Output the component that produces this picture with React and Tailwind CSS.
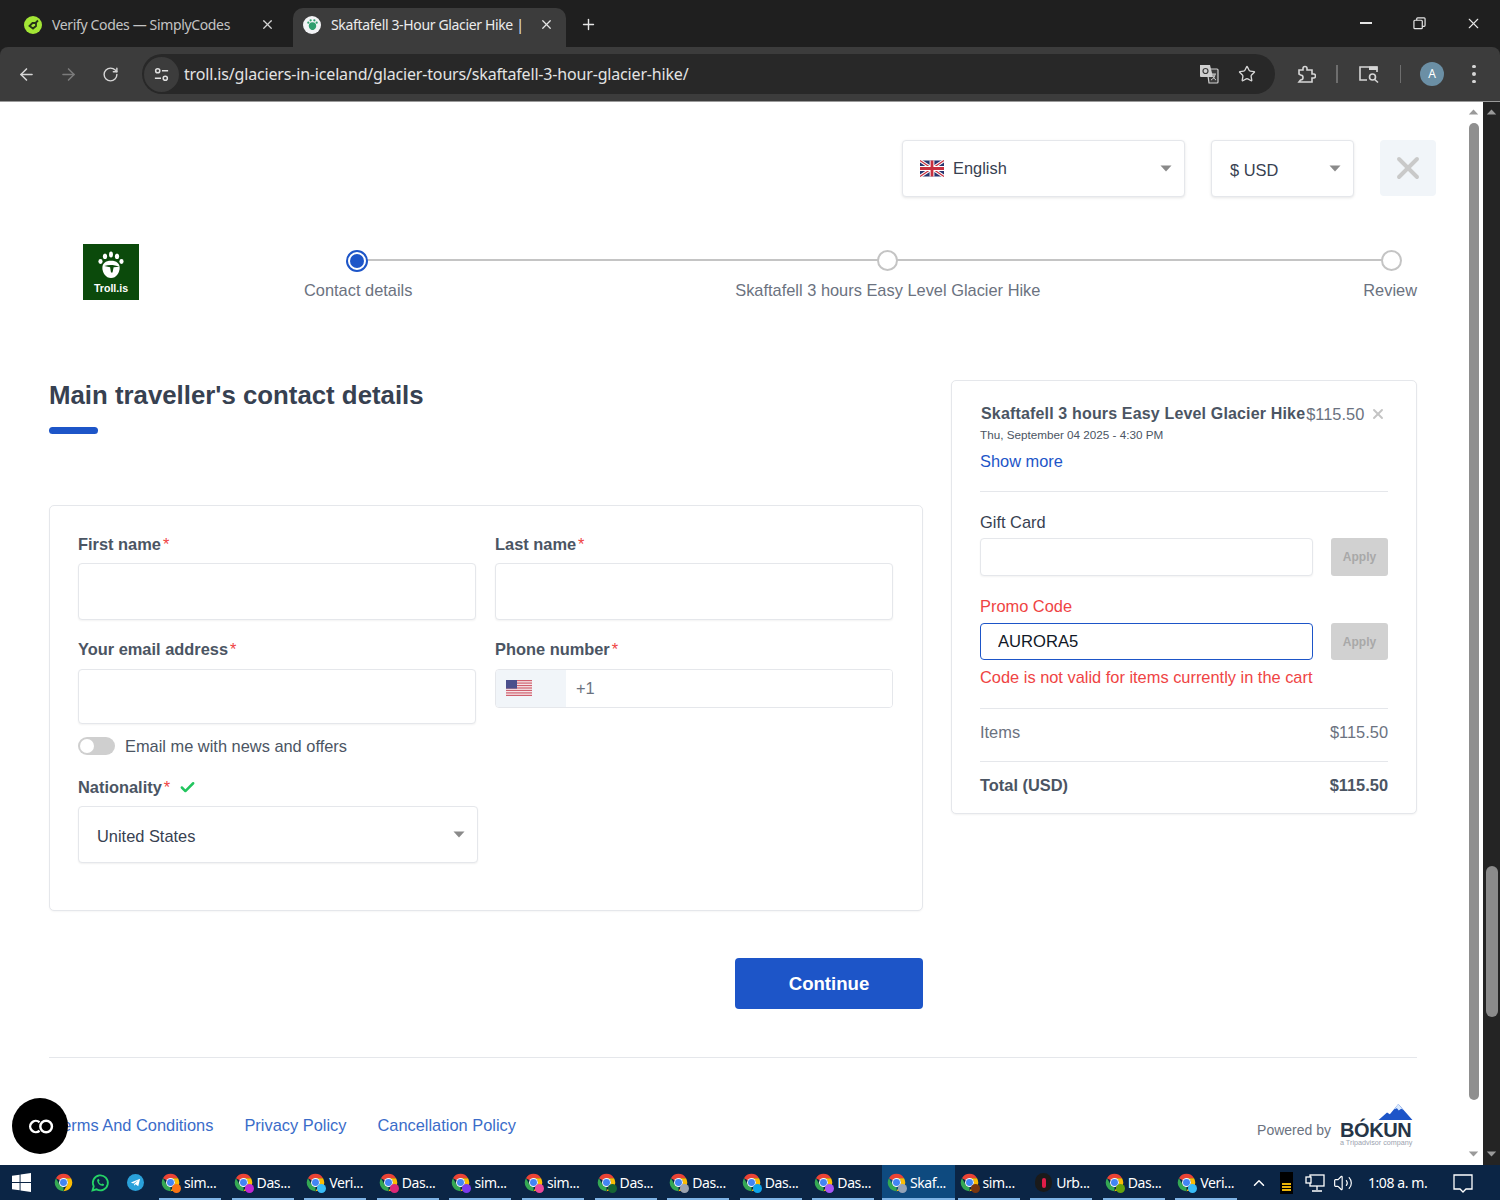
import { ArrowLeft, ArrowRight, RotateCw, Star, X, Plus, Check, ChevronUp, Volume2 } from 'lucide-react'

const taskItems = [
  { label: 'sim...', badge: '#f97316' },
  { label: 'Das...', badge: '#c026d3' },
  { label: 'Veri...', badge: '#38bdf8' },
  { label: 'Das...', badge: '#db2777' },
  { label: 'sim...', badge: '#7c3aed' },
  { label: 'sim...', badge: '#ec4899' },
  { label: 'Das...', badge: '#166534' },
  { label: 'Das...', badge: '#9ca3af' },
  { label: 'Das...', badge: '#0ea5e9' },
  { label: 'Das...', badge: '#a855f7' },
  { label: 'Skaf...', badge: '#94a3b8', active: true },
  { label: 'sim...', badge: '#78350f' },
  { label: 'Urb...', urb: true },
  { label: 'Das...', badge: '#65a30d' },
  { label: 'Veri...', badge: '#38bdf8' },
]

function ChromeIcon({ badge }) {
  return (
    <span className="relative block w-[19px] h-[19px] shrink-0">
      <svg viewBox="0 0 24 24" className="w-[19px] h-[19px]">
        <path fill="#ea4335" d="M12 1A11 11 0 0 1 21.53 6.5H12A5.5 5.5 0 0 0 7.24 9.25L2.47 6.5A11 11 0 0 1 12 1Z" />
        <path fill="#34a853" d="M2.47 6.5L7.24 14.75A5.5 5.5 0 0 0 12 17.5L12 23A11 11 0 0 1 2.47 6.5Z" />
        <path fill="#fbbc04" d="M21.53 6.5A11 11 0 0 1 12 23L16.76 14.75A5.5 5.5 0 0 0 16.76 9.25L12 6.5Z" />
        <circle cx="12" cy="12" r="5.6" fill="#fff" />
        <circle cx="12" cy="12" r="4.4" fill="#4285f4" />
      </svg>
      {badge && <span className="absolute -right-[1px] -bottom-[1px] w-[9px] h-[9px] rounded-full" style={{ backgroundColor: badge }} />}
    </span>
  )
}

function Caret({ className }) {
  return (
    <svg viewBox="0 0 12 7" className={className}>
      <path d="M0.5 0.5h11L6 6.5z" fill="#8a8a8a" />
    </svg>
  )
}

function UkFlag() {
  return (
    <svg viewBox="0 0 60 40" className="w-[24px] h-[17px]">
      <rect width="60" height="40" fill="#27346f" />
      <path d="M0 0L60 40M60 0L0 40" stroke="#fff" strokeWidth="8" />
      <path d="M0 0L60 40M60 0L0 40" stroke="#c8303f" strokeWidth="3" />
      <path d="M30 0V40M0 20H60" stroke="#fff" strokeWidth="12" />
      <path d="M30 0V40M0 20H60" stroke="#c8303f" strokeWidth="7" />
    </svg>
  )
}

function UsFlag() {
  const stripes = [0, 2, 4, 6, 8, 10, 12]
  return (
    <svg viewBox="0 0 26 16" className="w-[28px] h-[16px]">
      <rect width="26" height="16" fill="#f8eef0" />
      {stripes.map((y) => <rect key={y} y={y * 1.23} width="26" height="1.23" fill="#cf5f6e" />)}
      <rect width="11" height="8.6" fill="#4a4f8c" />
    </svg>
  )
}

function TrollMark() {
  return (
    <svg viewBox="0 0 40 40" className="w-[30px] h-[30px]">
      <g fill="#fff">
        <ellipse cx="6" cy="14" rx="2.800" ry="3.200" />
        <ellipse cx="12" cy="7" rx="2.800" ry="3.800" />
        <ellipse cx="20" cy="4.500" rx="2.600" ry="4" />
        <ellipse cx="28" cy="7" rx="2.800" ry="3.800" />
        <ellipse cx="34" cy="14" rx="2.800" ry="3.200" />
        <path d="M20 13c7.500 0 11.500 3.500 11.500 9.500S27 36 20 36 8.500 28.500 8.500 22.500 12.500 13 20 13z" />
      </g>
      <path d="M11 20c6-2 13-2 20 1l-7.500 .8-1.500 7h-2l-1.200-7.200z" fill="#0b4a0b" />
    </svg>
  )
}

function Label({ children }) {
  return (
    <div className="h-[20px] leading-[20px] text-[16.4px] font-bold text-[#4b5563] whitespace-nowrap">
      {children}<span className="text-[#ef4444] font-normal ml-[2px]">*</span>
    </div>
  )
}

function TextInput({ className }) {
  return <input readOnly className={`block w-full bg-white border border-[#e5e7eb] rounded-[4px] shadow-[0_1px_2px_rgba(0,0,0,0.05)] ${className}`} />
}

function ApplyButton() {
  return (
    <button className="w-[57px] h-full bg-[#d1d1d1] rounded-[3px] text-[12px] font-bold text-[#a8a8a8]">Apply</button>
  )
}

function TabBar() {
  return (
    <div className="h-[47px] bg-[#1f1f1f] flex items-end shrink-0 font-['Noto_Sans',sans-serif] text-[14px] tracking-[-0.35px]">
      <div className="w-[293px] h-[39px] flex items-center pl-[24px] pb-[6px] text-[#c4c4c4]">
        <span className="w-[18px] h-[18px] rounded-full bg-[#a3e635] flex items-center justify-center">
          <svg viewBox="0 0 12 12" className="w-[12px] h-[12px]" fill="none" stroke="#27331a" strokeWidth="1.800">
            <path d="M2.500 7l3-3h3.500v3l-3 2.500z" />
            <path d="M8.500 4L11 1.500" />
          </svg>
        </span>
        <span className="ml-[10px] w-[206px] whitespace-nowrap">Verify Codes — SimplyCodes</span>
        <X className="w-[15px] h-[15px] text-[#d4d4d4] ml-[2px]" />
      </div>
      <div className="relative w-[273px] h-[39px] bg-[#3c3c3c] rounded-t-[10px] flex items-center pl-[10px] pb-[6px] text-[#ececec]">
        <span className="w-[18px] h-[18px] rounded-full bg-[#f3f4f6] flex items-center justify-center">
          <svg viewBox="0 0 14 14" className="w-[13px] h-[13px]" fill="#2f9e6e">
            <circle cx="2.500" cy="5" r="1.200" />
            <circle cx="5" cy="2.500" r="1.200" />
            <circle cx="9" cy="2.500" r="1.200" />
            <circle cx="11.500" cy="5" r="1.200" />
            <path d="M7 4.500c3 0 4 2 4 4s-2 4.500-4 4.500-4-2.500-4-4.500 1-4 4-4z" />
          </svg>
        </span>
        <span className="ml-[10px] w-[206px] overflow-hidden whitespace-nowrap">Skaftafell 3-Hour Glacier Hike |</span>
        <X className="w-[15px] h-[15px] text-[#e5e5e5] ml-[2px]" />
      </div>
      <Plus className="w-[17px] h-[17px] text-[#e5e5e5] ml-[14px] mb-[14px]" />
      <div className="flex-1" />
      <div className="flex items-center h-[47px] pb-[1px] text-[#e5e5e5]">
        <span className="block w-[12px] h-[1.500px] bg-[#e5e5e5] mr-[41px]" />
        <svg viewBox="0 0 14 14" className="w-[13px] h-[13px] mr-[39px]" fill="none" stroke="currentColor" strokeWidth="1.300">
          <rect x="1" y="3.500" width="9" height="9" rx="1" />
          <path d="M4 3.500V2a1 1 0 0 1 1-1h7a1 1 0 0 1 1 1v7a1 1 0 0 1-1 1h-2" />
        </svg>
        <X className="w-[17px] h-[17px] mr-[18px]" strokeWidth={1.6} />
      </div>
    </div>
  )
}

function Toolbar() {
  return (
    <div className="h-[55px] bg-[#3c3c3c] rounded-t-[8px] flex items-center shrink-0 text-[#d6d6d6] border-b border-[#9a9a9a]">
      <ArrowLeft className="w-[19px] h-[19px] ml-[17px]" />
      <ArrowRight className="w-[19px] h-[19px] ml-[23px] text-[#7b7b7b]" />
      <RotateCw className="w-[17px] h-[17px] ml-[24px]" />
      <div className="ml-[23px] w-[1133px] h-[40px] rounded-full bg-[#282828] flex items-center">
        <span className="ml-[2px] w-[35px] h-[35px] rounded-full bg-[#3c3c3c] flex items-center justify-center">
          <svg viewBox="0 0 18 18" className="w-[17px] h-[17px]" fill="none" stroke="#e0e0e0" strokeWidth="1.600">
            <circle cx="5" cy="5" r="2.200" />
            <path d="M9.500 5H16M2 13h6.500" />
            <circle cx="13" cy="13" r="2.200" />
          </svg>
        </span>
        <span className="ml-[5px] text-[16px] tracking-[-0.17px] text-[#e3e3e3] font-['Noto_Sans',sans-serif] whitespace-nowrap">
          troll.is/glaciers-in-iceland/glacier-tours/skaftafell-3-hour-glacier-hike/
        </span>
        <div className="flex-1" />
        <svg viewBox="0 0 20 20" className="w-[20px] h-[20px] mr-[1px]">
          <path d="M8 5h10a1 1 0 0 1 1 1v12a1 1 0 0 1-1 1H10z" fill="#3c3c3c" stroke="#cfcfcf" strokeWidth="1.200" />
          <path d="M1 1h10l3 12H2a1 1 0 0 1-1-1z" fill="#cfcfcf" />
          <circle cx="6.500" cy="7" r="2.500" fill="none" stroke="#3c3c3c" strokeWidth="1.200" />
          <path d="M12 10h5M14 10c0 3 1 5 3 6M16 10c0 3-2 5-4 6" stroke="#cfcfcf" fill="none" strokeWidth="1" />
        </svg>
        <Star className="w-[18px] h-[18px] ml-[18px] mr-[19px]" strokeWidth={1.8} />
      </div>
      <svg viewBox="0 0 20 20" className="w-[20px] h-[20px] ml-[21px]" fill="none" stroke="#d6d6d6" strokeWidth="1.600">
        <path d="M3 6h4V4.500a2 2 0 0 1 4 0V6h5v4h1.500a2 2 0 0 1 0 4H16v4H3l1.500-2a2.500 2.500 0 0 0 0-5L3 10z" />
      </svg>
      <span className="w-[1.500px] h-[18px] bg-[#6e6e6e] ml-[20px]" />
      <svg viewBox="0 0 22 20" className="w-[22px] h-[20px] ml-[20px]" fill="none" stroke="#d6d6d6" strokeWidth="1.600">
        <path d="M9 16H2V3h17v5" />
        <rect x="11" y="2.500" width="8.500" height="3.500" fill="#d6d6d6" stroke="none" />
        <circle cx="14.500" cy="13" r="3" />
        <path d="M16.700 15.500L20 18.500" />
      </svg>
      <span className="w-[1.500px] h-[18px] bg-[#6e6e6e] ml-[20px]" />
      <span className="w-[24px] h-[24px] ml-[19px] rounded-full bg-[#6b8fa5] text-white text-[12px] flex items-center justify-center">A</span>
      <span className="ml-[28px] flex flex-col gap-[4px]">
        <span className="w-[3.500px] h-[3.500px] rounded-full bg-[#d6d6d6]" />
        <span className="w-[3.500px] h-[3.500px] rounded-full bg-[#d6d6d6]" />
        <span className="w-[3.500px] h-[3.500px] rounded-full bg-[#d6d6d6]" />
      </span>
    </div>
  )
}

function SelectBox({ width, children }) {
  return (
    <div className={`${width} h-[57px] bg-white border border-[#e5e7eb] rounded-[4px] shadow-[0_1px_3px_rgba(0,0,0,0.1)] flex items-center justify-between pl-[17px] pr-[18px]`}>
      {children}
    </div>
  )
}

function Stepper() {
  const steps = [
    { label: 'Contact details', active: true },
    { label: 'Skaftafell 3 hours Easy Level Glacier Hike' },
    { label: 'Review', shift: true },
  ]
  return (
    <div className="relative ml-[165px] w-[1113px] flex justify-between h-[56px]">
      <span className="absolute left-[54px] right-[26px] top-[15px] h-[2px] bg-[#c4c4c4]" />
      {steps.map((s) => (
        <div key={s.label} className="relative flex flex-col items-center">
          {s.active ? (
            <span className="w-[22px] h-[22px] mt-[6px] -ml-[2px] rounded-full border-2 border-[#1d55c8] bg-white flex items-center justify-center">
              <span className="w-[14px] h-[14px] rounded-full bg-[#1d55c8]" />
            </span>
          ) : (
            <span className={`w-[21px] h-[21px] mt-[6px] mb-[1px] rounded-full border-2 border-[#c4c4c4] bg-white ${s.shift ? 'ml-[2px]' : ''}`} />
          )}
          <span className="mt-[8px] h-[20px] leading-[20px] text-[16.4px] text-[#6b7280] whitespace-nowrap">{s.label}</span>
        </div>
      ))}
    </div>
  )
}

function ContactForm() {
  return (
    <div className="h-[406px] mt-[71px] bg-white border border-[#e5e7eb] rounded-[5px] shadow-[0_1px_2px_rgba(0,0,0,0.04)] pl-[28px] pr-[29px] pt-[28px] grid grid-cols-2 gap-x-[19px] content-start">
      <div>
        <Label>First name</Label>
        <TextInput className="h-[57px] mt-[9px]" />
      </div>
      <div>
        <Label>Last name</Label>
        <TextInput className="h-[57px] mt-[9px]" />
      </div>
      <div className="mt-[19px]">
        <Label>Your email address</Label>
        <TextInput className="h-[55px] mt-[10px]" />
        <div className="flex items-center mt-[13px] h-[18px]">
          <span className="w-[37px] h-[18px] rounded-full bg-[#cfcfcf] flex items-center pl-[2px]">
            <span className="w-[14px] h-[14px] rounded-full bg-white" />
          </span>
          <span className="ml-[10px] h-[18px] leading-[18px] text-[16.4px] text-[#4b5563] whitespace-nowrap">Email me with news and offers</span>
        </div>
        <div className="flex items-center mt-[22px]">
          <Label>Nationality</Label>
          <Check className="w-[17px] h-[17px] ml-[9px] text-[#22c55e]" strokeWidth={3.5} />
        </div>
        <div className="w-[400px] h-[57px] mt-[9px] bg-white border border-[#e5e7eb] rounded-[4px] shadow-[0_1px_2px_rgba(0,0,0,0.06)] flex items-center justify-between pl-[18px] pr-[12px]">
          <span className="text-[16.4px] text-[#374151] mt-[3px]">United States</span>
          <Caret className="w-[12px] h-[7px]" />
        </div>
      </div>
      <div className="mt-[19px]">
        <Label>Phone number</Label>
        <div className="h-[39px] mt-[10px] flex border border-[#e5e7eb] rounded-[4px] overflow-hidden">
          <div className="w-[70px] bg-[#f1f5f9] flex items-start pt-[10px] pl-[9px]">
            <UsFlag />
          </div>
          <div className="flex-1 bg-white pl-[10px] leading-[37px] text-[16.4px] text-[#6b7280]">+1</div>
        </div>
      </div>
    </div>
  )
}

function OrderCard() {
  return (
    <div className="w-[466px] h-[434px] shrink-0 bg-white border border-[#e5e7eb] rounded-[5px] shadow-[0_1px_2px_rgba(0,0,0,0.05)] px-[28px] pt-[23px]">
      <div className="flex items-center h-[20px] leading-[20px] whitespace-nowrap">
        <span className="ml-[1px] text-[16px] font-bold text-[#4b5563] tracking-[0.16px]">Skaftafell 3 hours Easy Level Glacier Hike</span>
        <span className="ml-[1px] text-[16.4px] text-[#6b7280]">$115.50</span>
        <X className="w-[16px] h-[16px] ml-[6px] text-[#c4c4c4]" strokeWidth={2.8} />
      </div>
      <div className="mt-[4px] h-[14px] leading-[14px] text-[11.7px] text-[#4b5563] whitespace-nowrap">Thu, September 04 2025 - 4:30 PM</div>
      <div className="mt-[9px] h-[20px] leading-[20px] text-[16.4px] text-[#1d55c8]">Show more</div>
      <div className="mt-[20px] h-px bg-[#e5e7eb]" />

      <div className="mt-[20px] h-[20px] leading-[20px] text-[16.4px] text-[#374151]">Gift Card</div>
      <div className="mt-[6px] h-[38px] flex justify-between">
        <TextInput className="!w-[333px] h-[38px]" />
        <ApplyButton />
      </div>
      <div className="mt-[20px] h-[20px] leading-[20px] text-[16.4px] text-[#ef4444]">Promo Code</div>
      <div className="mt-[7px] h-[37px] flex justify-between">
        <input readOnly value="AURORA5" className="block w-[333px] h-[37px] border border-[#1d55c8] rounded-[4px] pl-[17px] text-[16.6px] text-[#111827] bg-white" />
        <ApplyButton />
      </div>
      <div className="mt-[7px] h-[20px] leading-[20px] text-[16.4px] text-[#ef4444] whitespace-nowrap">Code is not valid for items currently in the cart</div>

      <div className="mt-[21px] h-px bg-[#e5e7eb]" />
      <div className="mt-[13px] h-[20px] leading-[20px] flex justify-between text-[16.4px] text-[#6b7280]">
        <span>Items</span>
        <span>$115.50</span>
      </div>
      <div className="mt-[19px] h-px bg-[#e5e7eb]" />
      <div className="mt-[13px] h-[20px] leading-[20px] flex justify-between text-[16.4px] font-bold text-[#4b5563]">
        <span>Total (USD)</span>
        <span>$115.50</span>
      </div>
    </div>
  )
}

function Page() {
  return (
    <div className="relative flex-1 bg-white overflow-hidden text-[16px] font-['Liberation_Sans',Arial,sans-serif]">
      <div className="flex justify-end pt-[38px] pr-[31px]">
        <SelectBox width="w-[283px]">
          <span className="flex items-center gap-[9px] text-[#374151] text-[16.4px]"><UkFlag /> English</span>
          <Caret className="w-[12px] h-[7px] -mr-[6px]" />
        </SelectBox>
        <div className="ml-[26px]">
          <SelectBox width="w-[143px] !pl-[18px]">
            <span className="text-[#374151] text-[16.4px] mt-[3px]">$ USD</span>
            <Caret className="w-[12px] h-[7px] -mr-[6px]" />
          </SelectBox>
        </div>
        <div className="ml-[26px] w-[56px] h-[56px] bg-[#f1f5f9] rounded-[4px] flex items-center justify-center">
          <X className="w-[36px] h-[36px] text-[#c9c9c9]" strokeWidth={2.6} />
        </div>
      </div>

      <div className="flex mt-[47px] pl-[83px]">
        <div className="w-[56px] h-[56px] bg-[#0b4a0b] flex flex-col items-center pt-[7px]">
          <TrollMark />
          <span className="mt-[1px] text-[10.6px] leading-[12px] font-bold text-white">Troll.is</span>
        </div>
        <Stepper />
      </div>

      <div className="flex gap-[28px] mt-[80px] px-[49px] w-[1417px]">
        <div className="w-[874px] shrink-0">
          <h1 className="h-[30px] leading-[30px] text-[25.8px] font-bold text-[#374151] whitespace-nowrap">Main traveller's contact details</h1>
          <div className="w-[49px] h-[7px] mt-[17px] rounded-full bg-[#1d55c8]" />
          <ContactForm />
          <div className="flex justify-end mt-[47px]">
            <button className="w-[188px] h-[51px] rounded-[4px] bg-[#1d55c8] text-white text-[18.6px] font-bold">Continue</button>
          </div>
        </div>
        <OrderCard />
      </div>

      <div className="ml-[49px] w-[1368px] h-px bg-[#e5e7eb] mt-[48px]" />

      <div className="ml-[49px] w-[1368px] mt-[46px] flex items-center justify-between pr-[4px]">
        <div className="flex gap-[31px] pl-[5px] -mt-[2px] text-[16.4px] text-[#3a6cc9]">
          <span>Terms And Conditions</span>
          <span>Privacy Policy</span>
          <span>Cancellation Policy</span>
        </div>
        <div className="flex items-center h-[44px]">
          <span className="text-[14px] text-[#6b7280] mr-[9px] mt-[8px]">Powered by</span>
          <div className="relative w-[73px] h-[44px]">
            <svg viewBox="0 0 36 17" className="absolute right-0 top-0 w-[35px] h-[16px]">
              <path d="M0 17L9 9l3 2L21 0l15 17z" fill="#1d55c8" />
              <path d="M21 0l-4.500 5.500 3-1 2 2.500 2.500-2 2 1z" fill="#dbeafe" />
            </svg>
            <span className="absolute left-0 top-[14px] text-[20px] leading-[24px] font-bold text-[#263547] tracking-[-0.4px] whitespace-nowrap">BÓKUN</span>
            <span className="absolute left-0 top-[34px] text-[7.2px] leading-[10px] text-[#9ca3af] whitespace-nowrap">a Tripadvisor company</span>
          </div>
        </div>
      </div>

      {/* floating widget over the footer links */}
      <div className="absolute left-[12px] top-[996px] w-[56px] h-[56px] rounded-full bg-black flex items-center justify-center">
        <svg viewBox="0 0 30 16" className="w-[29px] h-[15px]" fill="none" stroke="#fff" strokeWidth="2.600">
          <path d="M14 3.500A6 6 0 1 0 14 12.500" />
          <circle cx="21" cy="8" r="6.200" />
        </svg>
      </div>
    </div>
  )
}

function Triangle({ down, color }) {
  return (
    <svg viewBox="0 0 12 7" className={`w-[11px] h-[6px] ${down ? 'rotate-180' : ''}`}>
      <path d="M6 0.5L11.500 6.500H0.5z" fill={color} />
    </svg>
  )
}

function Scrollbars() {
  return (
    <>
      <div className="w-[16px] bg-white flex flex-col items-center pt-[7px] pb-[8px] pr-[3px]">
        <Triangle color="#9a9a9a" />
        <div className="w-[10px] h-[977px] mt-[8px] rounded-full bg-[#8f8f8f]" />
        <div className="flex-1" />
        <Triangle down color="#9a9a9a" />
      </div>
      <div className="w-[17px] bg-[#242424] flex flex-col items-center pt-[7px] pb-[8px]">
        <Triangle color="#9a9a9a" />
        <div className="w-[12px] h-[151px] mt-[751px] rounded-full bg-[#8b8b8b]" />
        <div className="flex-1" />
        <Triangle down color="#9a9a9a" />
      </div>
    </>
  )
}

function Taskbar() {
  return (
    <div className="h-[35px] shrink-0 bg-[#0b2545] flex items-center text-white font-['Noto_Sans',sans-serif] text-[14px] tracking-[-0.4px]">
      <svg viewBox="0 0 20 20" className="w-[19px] h-[19px] ml-[12px]" fill="#fff">
        <path d="M0 3l8-1.200V9.500H0zM9 1.600L20 0v9.500H9zM0 10.500h8v7.700L0 17zM9 10.500h11V20L9 18.400z" />
      </svg>
      <span className="ml-[23px]"><ChromeIcon /></span>
      <svg viewBox="0 0 24 24" className="w-[20px] h-[20px] ml-[17px]" fill="none" stroke="#25d366" strokeWidth="2.200">
        <path d="M3 21l1.500-5A9 9 0 1 1 8 19.600z" />
        <path d="M8.500 8c0 4 3.500 7.500 7.500 7.500l1-2-2.500-1-1 1c-1-.5-2.500-2-3-3l1-1-1-2.500z" fill="#25d366" stroke="none" />
      </svg>
      <span className="ml-[17px] w-[17px] h-[17px] rounded-full bg-[#2aa1da] flex items-center justify-center">
        <svg viewBox="0 0 12 12" className="w-[11px] h-[11px]"><path d="M1 6l10-4-2 8-3-2-1.500 1.500V7.500L9 3.500 3.500 7z" fill="#fff" /></svg>
      </span>
      <div className="ml-[12px] flex h-full">
        {taskItems.map((t, i) => (
          <div
            key={i}
            className={`relative w-[72.6px] h-full flex items-center pl-[5px] ${t.active ? 'bg-[#0e4a7f]' : ''}`}
          >
            {t.urb ? (
              <span className="ml-[3px] w-[17px] h-[19px] rounded-full bg-[#1a1a1a] flex items-center justify-center">
                <span className="w-[4px] h-[10px] rounded-[2px] bg-[#e11d48]" />
              </span>
            ) : (
              <ChromeIcon badge={t.badge} />
            )}
            <span className="ml-[4px] whitespace-nowrap">{t.label}</span>
            <span className={`absolute bottom-0 h-[2px] bg-[#7fb4e6] ${t.active ? 'left-0 w-full' : 'left-[3px] w-[62px]'}`} />
          </div>
        ))}
      </div>
      <ChevronUp className="w-[18px] h-[18px] ml-[5px]" strokeWidth={2} />
      <span className="ml-[12px] w-[13px] h-[22px] bg-black flex flex-col justify-end gap-[1px] items-center pb-[3px]">
        <span className="w-[9px] h-[2px] bg-[#eab308]" />
        <span className="w-[9px] h-[2px] bg-[#eab308]" />
        <span className="w-[9px] h-[2px] bg-[#eab308]" />
      </span>
      <svg viewBox="0 0 20 20" className="w-[20px] h-[20px] ml-[12px]" fill="none" stroke="#fff" strokeWidth="1.300">
        <rect x="5" y="2" width="14" height="11" />
        <rect x="1" y="4" width="5" height="6" fill="#0b2545" />
        <path d="M12 13v4M7 18h10" />
      </svg>
      <Volume2 className="w-[20px] h-[20px] ml-[8px]" strokeWidth={1.4} />
      <span className="ml-[15px] whitespace-nowrap">1:08 a. m.</span>
      <svg viewBox="0 0 20 20" className="w-[20px] h-[20px] ml-[26px]" fill="none" stroke="#fff" strokeWidth="1.300">
        <path d="M1 2h18v14h-6l-3 3-3-3H1z" />
      </svg>
    </div>
  )
}

export default function App() {
  return (
    <div className="w-[1500px] h-[1200px] flex flex-col overflow-hidden bg-[#1f1f1f]">
      <TabBar />
      <Toolbar />
      <div className="flex-1 flex min-h-0">
        <Page />
        <Scrollbars />
      </div>
      <Taskbar />
    </div>
  )
}
